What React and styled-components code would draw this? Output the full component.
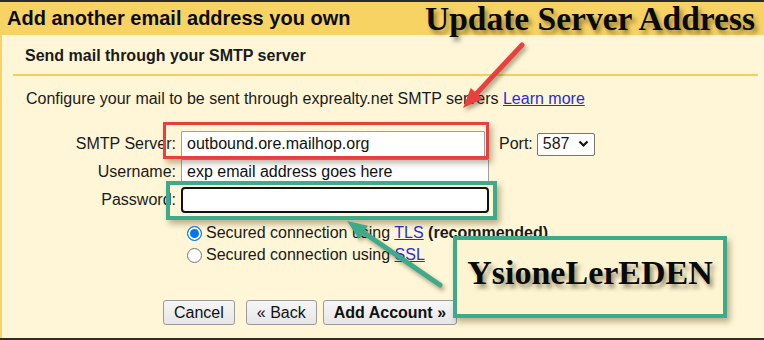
import React from "react";
import styled, { createGlobalStyle } from "styled-components";

const Global = createGlobalStyle`
  html, body { margin: 0; padding: 0; background: #fef6d6; }
  body { font-family: "Liberation Sans", Arial, sans-serif; }
`;

const Page = styled.div`
  position: relative;
  width: 764px;
  height: 340px;
  box-sizing: border-box;
  border-top: 2px solid #2c2c2c;
  border-bottom: 2px solid #2c2c2c;
  background: #fef6d6;
  display: flex;
  flex-direction: column;
  overflow: hidden;
  color: #1a1a1a;
`;

const Header = styled.div`
  height: 33px;
  flex: none;
  background: #f7d364;
  display: flex;
  align-items: center;
  padding-left: 7px;
  font-size: 20px;
  font-weight: bold;
  color: #0c0c0c;
`;

const Body = styled.div`
  flex: 1;
  border-left: 2px solid #f7d364;
  display: flex;
  flex-direction: column;
  font-size: 16px;
`;

const SubTitle = styled.div`
  font-weight: bold;
  line-height: 20px;
  padding: 11px 0 8px 23px;
`;

const Rule = styled.div`
  height: 2px;
  background: #f5cf5c;
  margin: 0 6px 0 11px;
`;

const Description = styled.div`
  line-height: 20px;
  margin: 13px 0 0 24px;
`;

const Link = styled.a`
  color: #2b2bd9;
  text-decoration: underline;
`;

const Form = styled.div`
  margin-top: 22px;
  display: grid;
  grid-template-columns: 174px auto;
  column-gap: 5px;
  row-gap: 2px;
  justify-content: start;
  align-items: center;
`;

const Label = styled.div`
  text-align: right;
  line-height: 20px;
`;

const FieldLine = styled.div`
  display: flex;
  align-items: center;
`;

const TextBox = styled.div`
  box-sizing: border-box;
  width: ${(p) => p.$w}px;
  height: 26px;
  background: #fff;
  border: ${(p) => (p.$focus ? "2px solid #111" : "1px solid #a0a0a0")};
  border-radius: ${(p) => (p.$focus ? "4px" : "1px")};
  padding-left: 5px;
  display: flex;
  align-items: center;
  font-size: 16px;
  color: #111;
`;

const PortLabel = styled.span`
  margin-left: 14px;
  margin-right: 4px;
`;

const SelectBox = styled.div`
  box-sizing: border-box;
  width: 58px;
  height: 23px;
  background: #fff;
  border: 1px solid #767676;
  border-radius: 2px;
  display: flex;
  align-items: center;
  justify-content: space-between;
  padding: 0 5px 0 5px;
`;

const Options = styled.div`
  grid-column: 2;
  margin: 7px 0 0 6px;
  display: flex;
  flex-direction: column;
`;

const RadioRow = styled.label`
  display: flex;
  align-items: center;
  height: 22px;
  gap: 4px;
`;

const RadioDot = styled.span`
  box-sizing: border-box;
  width: 15px;
  height: 15px;
  border-radius: 50%;
  border: ${(p) => (p.$on ? "1px solid #0075ff" : "1px solid #767676")};
  background: ${(p) => (p.$on ? "#0075ff" : "#fff")};
  box-shadow: ${(p) => (p.$on ? "inset 0 0 0 2px #fff" : "none")};
`;

const Buttons = styled.div`
  margin: 34px 0 0 161px;
  display: flex;
  align-items: center;
`;

const Button = styled.button`
  font-family: "Liberation Sans", Arial, sans-serif;
  font-size: 16px;
  font-weight: ${(p) => (p.$strong ? "bold" : "normal")};
  color: #111;
  height: 25px;
  padding: 0 ${(p) => (p.$strong ? 10 : 10)}px;
  margin-left: ${(p) => p.$ml || 0}px;
  background: linear-gradient(#f6f6f6, #e6e6e6);
  border: 1px solid #9a9a9a;
  border-radius: 3px;
`;

const Shadowed = `
  box-shadow: 3px 4px 6px rgba(60, 40, 0, 0.35);
`;

const Callout = styled.div`
  position: absolute;
  left: ${(p) => p.$x}px;
  top: ${(p) => p.$y}px;
  width: ${(p) => p.$w}px;
  height: ${(p) => p.$h}px;
  box-sizing: border-box;
  border: ${(p) => p.$b}px solid ${(p) => p.$c};
  ${Shadowed}
  pointer-events: none;
`;

const NoteBox = styled.div`
  position: absolute;
  left: 453px;
  top: 234px;
  width: 274px;
  height: 82px;
  box-sizing: border-box;
  border: 4px solid #3dab8a;
  background: #fdf4d2;
  ${Shadowed}
  display: flex;
  align-items: center;
  justify-content: center;
  padding-bottom: 8px;
`;

const SerifCaption = styled.div`
  font-family: "Liberation Serif", "Times New Roman", serif;
  font-weight: bold;
  font-size: ${(p) => p.$size}px;
  line-height: 1;
  color: #0a0a0a;
  text-shadow: 3px 4px 4px rgba(40, 30, 0, 0.45);
  white-space: nowrap;
`;

const Headline = styled(SerifCaption)`
  position: absolute;
  left: 425px;
  top: 0px;
`;

const ArrowLayer = styled.svg`
  position: absolute;
  left: 0;
  top: 0;
  width: 764px;
  height: 340px;
  pointer-events: none;
  filter: drop-shadow(2px 3px 2px rgba(40, 30, 0, 0.4));
`;

function Arrow({ x1, y1, x2, y2, color }) {
  const dx = x2 - x1;
  const dy = y2 - y1;
  const len = Math.hypot(dx, dy);
  const ux = dx / len;
  const uy = dy / len;
  const hl = 20;
  const hw = 8;
  const bx = x2 - ux * hl;
  const by = y2 - uy * hl;
  const px = -uy * hw;
  const py = ux * hw;
  return (
    <g>
      <line x1={x1} y1={y1} x2={bx + ux * 2} y2={by + uy * 2} stroke={color} strokeWidth="5" strokeLinecap="round" />
      <polygon points={`${x2},${y2} ${bx + px},${by + py} ${bx - px},${by - py}`} fill={color} />
    </g>
  );
}

export default function App() {
  return (
    <>
      <Global />
      <Page>
        <Header>Add another email address you own</Header>
        <Body>
          <SubTitle>Send mail through your SMTP server</SubTitle>
          <Rule />
          <Description>
            Configure your mail to be sent through exprealty.net SMTP servers <Link href="#">Learn more</Link>
          </Description>
          <Form>
            <Label>SMTP Server:</Label>
            <FieldLine>
              <TextBox $w={304}>outbound.ore.mailhop.org</TextBox>
              <PortLabel>Port:</PortLabel>
              <SelectBox>
                <span>587</span>
                <svg width="11" height="8" viewBox="0 0 11 8">
                  <path d="M1.5 1.5 L5.5 5.5 L9.5 1.5" fill="none" stroke="#111" strokeWidth="2.2" />
                </svg>
              </SelectBox>
            </FieldLine>
            <Label>Username:</Label>
            <TextBox $w={308}>exp email address goes here</TextBox>
            <Label>Password:</Label>
            <TextBox $w={308} $focus />
            <Options>
              <RadioRow>
                <RadioDot $on />
                <span>
                  Secured connection using <Link href="#">TLS</Link> <b>(recommended)</b>
                </span>
              </RadioRow>
              <RadioRow>
                <RadioDot />
                <span>
                  Secured connection using <Link href="#">SSL</Link>
                </span>
              </RadioRow>
            </Options>
          </Form>
          <Buttons>
            <Button>Cancel</Button>
            <Button $ml={11}>« Back</Button>
            <Button $ml={6} $strong>Add Account »</Button>
          </Buttons>
        </Body>

        <Headline $size={33.5}>Update Server Address</Headline>
        <Callout $x={163} $y={120} $w={326} $h={37} $b={3} $c="#e8403f" />
        <Callout $x={166} $y={179} $w={331} $h={39} $b={4} $c="#3dab8a" />
        <ArrowLayer viewBox="0 0 764 340">
          <Arrow x1={522} y1={43} x2={463} y2={106} color="#e8403f" />
          <Arrow x1={440} y1={283} x2={347} y2={219} color="#3dab8a" />
        </ArrowLayer>
        <NoteBox>
          <SerifCaption $size={34}>YsioneLerEDEN</SerifCaption>
        </NoteBox>
      </Page>
    </>
  );
}
